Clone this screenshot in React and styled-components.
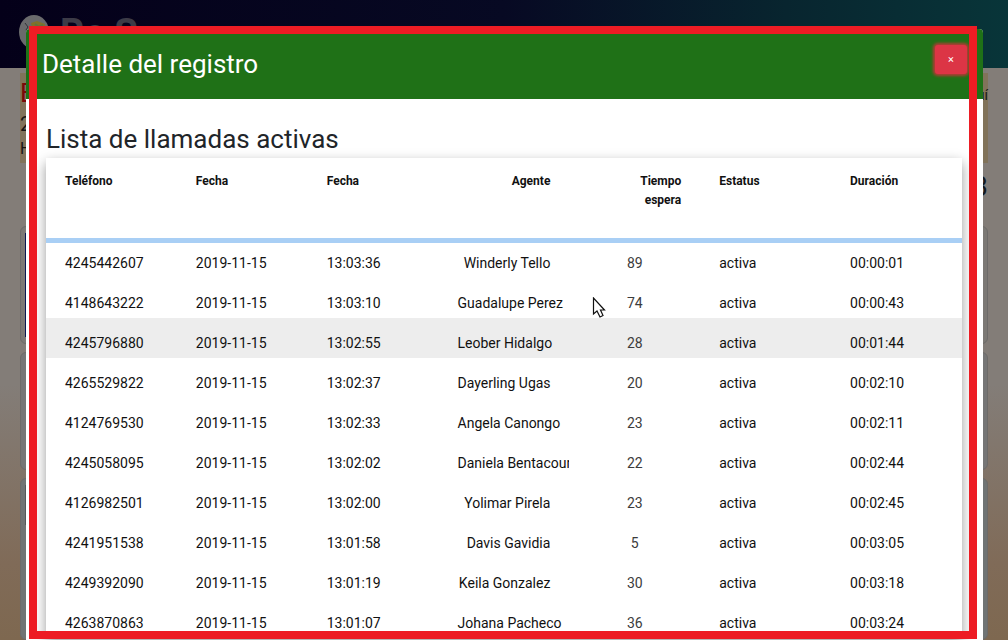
import React from "react";
import styled, { createGlobalStyle } from "styled-components";

const GlobalStyle = createGlobalStyle`
  * { box-sizing: border-box; }
  body {
    margin: 0;
    font-family: Roboto, "Liberation Sans", sans-serif;
    color: #212529;
  }
`;

const Screen = styled.div`
  position: relative;
  height: 100vh;
  overflow: hidden;
`;

const Page = styled.div`
  min-height: 100vh;
  display: flex;
  flex-direction: column;
  background: linear-gradient(#837d78 0, #837d78 60%, #806b58 88%, #7e6850 100%);
`;

const Navbar = styled.header`
  display: flex;
  align-items: flex-start;
  gap: 10px;
  height: 68px;
  padding: 14px 18px;
  background: linear-gradient(90deg, #040019 0%, #070923 50%, #08252f 78%, #083539 100%);
`;

const Brand = styled.span`
  font-size: 38px;
  line-height: 38px;
  font-weight: 700;
  color: #3c3b47;
`;

const Main = styled.main`
  display: flex;
  flex-direction: column;
  flex: 1;
  gap: 8px;
  padding: 5px 20px 0;
`;

const Notice = styled.section`
  display: flex;
  justify-content: space-between;
  height: 90px;
  padding: 4px 0 0;
  background: #81735a;
`;

const NoticeTitle = styled.h1`
  margin: 0;
  font-size: 26px;
  line-height: 32px;
  font-weight: 400;
  color: #7a0808;
`;

const NoticeLine = styled.p`
  margin: 0;
  font-size: ${(p) => (p.$large ? "20px" : "16px")};
  line-height: ${(p) => (p.$large ? "30px" : "20px")};
  color: #171513;
`;

const NoticeLink = styled.a`
  padding-top: 10px;
  font-size: 14px;
  color: #171513;
  text-decoration: none;
`;

const Total = styled.p`
  margin: 0;
  height: 47px;
  font-size: 28px;
  line-height: 32px;
  text-align: right;
  color: #16191c;
`;

const Card = styled.section`
  min-height: ${(p) => (p.$grow ? "160px" : "118px")};
  flex: ${(p) => (p.$grow ? "1" : "none")};
  padding: 6px 4px;
  border: 1px solid #6d6b69;
  border-radius: 6px;
  background: ${(p) => p.$tone};
`;

const CardBand = styled.div`
  height: ${(p) => (p.$short ? "40px" : "104px")};
  background: ${(p) => (p.$short ? "#55585a" : "#0b1550")};
`;

const Overlay = styled.div`
  position: absolute;
  inset: 0;
  padding: 29px 25px 0 26px;
  overflow: hidden;
`;

const Dialog = styled.div`
  border-radius: 4px;
  overflow: hidden;
  background: #fff;
`;

const DialogHeader = styled.div`
  display: flex;
  align-items: flex-start;
  justify-content: space-between;
  height: 70px;
  padding: 16px;
  background: #1f7117;
  color: #fff;
`;

const DialogTitle = styled.h2`
  margin: 0;
  font-size: 26px;
  line-height: 38px;
  font-weight: 400;
`;

const CloseButton = styled.button`
  width: 32px;
  height: 29px;
  padding: 0;
  border: 0;
  border-radius: 3px;
  background: #dc3545;
  box-shadow: 0 0 3px 2px #b53a35;
  color: #fff;
  font: 400 11px/29px Roboto, "Liberation Sans", sans-serif;
`;

const DialogBody = styled.div`
  padding: 22px 21px 20px 20px;
`;

const ListTitle = styled.h3`
  margin: 0;
  font-size: 26px;
  line-height: 37px;
  font-weight: 400;
`;

const TableCard = styled.div`
  background: #fff;
  box-shadow: 0 5px 12px rgba(0, 0, 0, 0.4);
`;

const Table = styled.table`
  width: 100%;
  table-layout: fixed;
  border-collapse: collapse;
  color: #111;
`;

const HeadCell = styled.th`
  height: 80px;
  padding: 14px 19px 0;
  vertical-align: top;
  font-size: 12px;
  line-height: 19px;
  font-weight: 700;
  text-align: ${(p) => p.$align || "left"};
`;

const Row = styled.tr`
  background: ${(p) => (p.$active ? "#ededed" : "#fff")};
  box-shadow: ${(p) => (p.$first ? "inset 0 5px #a9cff5" : "none")};
`;

const Cell = styled.td`
  height: 40px;
  padding: 10px 19px 0;
  overflow: hidden;
  white-space: nowrap;
  font-size: 14px;
  line-height: 30px;
  text-align: ${(p) => p.$align || "left"};
  color: ${(p) => (p.$muted ? "#3c3c3c" : "inherit")};
`;

const Highlight = styled.div`
  position: absolute;
  inset: 26px 31px 1px 29px;
  border: 8px solid #ed1c24;
  pointer-events: none;
`;

const Pointer = styled.svg`
  position: absolute;
  left: 592px;
  top: 297px;
`;

const calls = [
  ["4245442607", "13:03:36", "Winderly Tello", 89, "00:00:01"],
  ["4148643222", "13:03:10", "Guadalupe Perez", 74, "00:00:43"],
  ["4245796880", "13:02:55", "Leober Hidalgo", 28, "00:01:44"],
  ["4265529822", "13:02:37", "Dayerling Ugas", 20, "00:02:10"],
  ["4124769530", "13:02:33", "Angela Canongo", 23, "00:02:11"],
  ["4245058095", "13:02:02", "Daniela Bentacourt", 22, "00:02:44"],
  ["4126982501", "13:02:00", "Yolimar Pirela", 23, "00:02:45"],
  ["4241951538", "13:01:58", "Davis Gavidia", 5, "00:03:05"],
  ["4249392090", "13:01:19", "Keila Gonzalez", 30, "00:03:18"],
  ["4263870863", "13:01:07", "Johana Pacheco", 36, "00:03:24"],
];

function Logo() {
  return (
    <svg width="32" height="36" viewBox="0 0 32 36" aria-hidden="true">
      <ellipse cx="16" cy="18" rx="15" ry="17" fill="#6a6a6c" />
      <path d="M7 9l3 4-2 3 4 5" stroke="#303238" fill="none" />
      <path d="M13 9l6-2 8 3-1 6-8 1-4-4z" fill="#80722a" />
      <path d="M17 10l4 3 4-2" stroke="#5d7440" strokeWidth="2" fill="none" />
    </svg>
  );
}

export default function App() {
  return (
    <Screen>
      <GlobalStyle />
      <Page>
        <Navbar>
          <Logo />
          <Brand>Re S</Brand>
        </Navbar>
        <Main>
          <Notice>
            <div>
              <NoticeTitle>E</NoticeTitle>
              <NoticeLine $large>2</NoticeLine>
              <NoticeLine>H</NoticeLine>
            </div>
            <NoticeLink href="#aqui">aquí</NoticeLink>
          </Notice>
          <Total>3</Total>
          <Card $tone="#7c7975">
            <CardBand />
          </Card>
          <Card $tone="#767676" />
          <Card $tone="#707474" $grow>
            <CardBand $short />
          </Card>
        </Main>
      </Page>
      <Overlay>
        <Dialog role="dialog" aria-labelledby="dialog-title">
          <DialogHeader>
            <DialogTitle id="dialog-title">Detalle del registro</DialogTitle>
            <CloseButton type="button" aria-label="Cerrar">×</CloseButton>
          </DialogHeader>
          <DialogBody>
            <ListTitle>Lista de llamadas activas</ListTitle>
            <TableCard>
              <Table>
                <thead>
                  <tr>
                    <HeadCell>Teléfono</HeadCell>
                    <HeadCell>Fecha</HeadCell>
                    <HeadCell>Fecha</HeadCell>
                    <HeadCell $align="right">Agente</HeadCell>
                    <HeadCell $align="right">Tiempo<br />espera</HeadCell>
                    <HeadCell>Estatus</HeadCell>
                    <HeadCell>Duración</HeadCell>
                  </tr>
                </thead>
                <tbody>
                  {calls.map(([phone, time, agent, wait, duration], i) => (
                    <Row key={phone} $first={i === 0} $active={i === 2}>
                      <Cell>{phone}</Cell>
                      <Cell>2019-11-15</Cell>
                      <Cell>{time}</Cell>
                      <Cell $align="right">{agent}</Cell>
                      <Cell $align="center" $muted>{wait}</Cell>
                      <Cell>activa</Cell>
                      <Cell>{duration}</Cell>
                    </Row>
                  ))}
                </tbody>
              </Table>
            </TableCard>
          </DialogBody>
        </Dialog>
      </Overlay>
      <Highlight />
      <Pointer width="14" height="22" viewBox="0 0 14 22" aria-hidden="true">
        <path
          d="M1.500 1v16l3.500-3 3 6 3-1.500-2.500-5.500h4z"
          fill="#fff"
          stroke="#111"
          strokeWidth="1.200"
        />
      </Pointer>
    </Screen>
  );
}
